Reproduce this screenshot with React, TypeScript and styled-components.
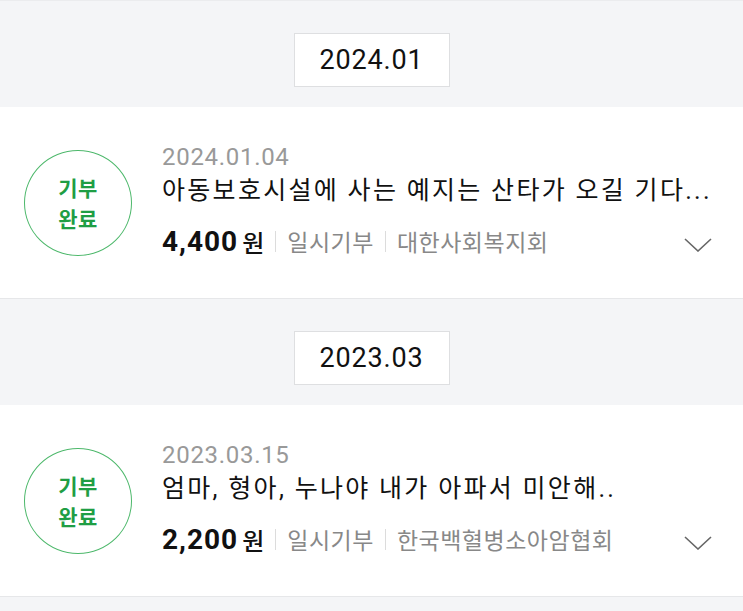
import React from "react";
import styled, { createGlobalStyle } from "styled-components";

const Global = createGlobalStyle`
  html, body { margin: 0; padding: 0; background: #f4f5f7; }
  body { font-family: Roboto, "Noto Sans CJK KR", sans-serif; }
`;

const Page = styled.div`
  width: 743px;
  border-top: 1px solid #ebecee;
  background: #f4f5f7;
`;

const MonthBand = styled.div<{ $end?: boolean }>`
  display: flex;
  justify-content: center;
  padding: ${(p) => (p.$end ? "0" : "32px 0 20px")};
  height: ${(p) => (p.$end ? "12px" : "auto")};
  background: #f4f5f7;
`;

const MonthBox = styled.div`
  width: 154px;
  height: 52px;
  border: 1px solid #dedfe1;
  background: #fff;
  display: flex;
  align-items: center;
  justify-content: center;
  font-family: Roboto, sans-serif;
  font-size: 27px;
  letter-spacing: 0.8px;
  color: #111;
`;

const Card = styled.div`
  display: flex;
  align-items: center;
  height: 191px;
  padding: 0 31px 0 24px;
  background: #fff;
  border-bottom: 1px solid #e6e7e9;
`;

const Badge = styled.div`
  flex: none;
  width: 106px;
  height: 104px;
  border: 1.5px solid #4db86b;
  border-radius: 50%;
  display: flex;
  flex-direction: column;
  align-items: center;
  justify-content: center;
  color: #1f9e44;
  font-family: "Noto Sans CJK KR", sans-serif;
  font-weight: 700;
  font-size: 21px;
  line-height: 31px;
  letter-spacing: 0.5px;
  margin-top: 1px;
`;

const BadgeLine = styled.span`
  display: block;
  height: 31px;
`;

const Body = styled.div`
  flex: 1;
  margin-left: 30px;
  display: flex;
  flex-direction: column;
`;

const DateText = styled.div`
  font-family: Roboto, sans-serif;
  font-size: 24px;
  line-height: 30px;
  letter-spacing: 0.7px;
  color: #999;
  margin-top: -4px;
`;

const Title = styled.div`
  font-family: Roboto, "Noto Sans CJK KR", sans-serif;
  font-size: 25px;
  line-height: 38px;
  letter-spacing: 2.3px;
  color: #111;
  white-space: nowrap;
`;

const Meta = styled.div`
  display: flex;
  align-items: center;
  height: 36px;
  margin-top: 13px;
`;

const Amount = styled.span`
  font-family: Roboto, sans-serif;
  font-weight: 700;
  font-size: 28px;
  letter-spacing: 1px;
  color: #111;
`;

const Won = styled.span`
  font-family: "Noto Sans CJK KR", sans-serif;
  font-weight: 500;
  font-size: 24px;
  color: #111;
  margin-left: 4px;
`;

const Divider = styled.span`
  width: 1px;
  height: 21px;
  background: #dcdcdc;
  margin: 0 11px;
`;

const MetaText = styled.span`
  font-family: "Noto Sans CJK KR", sans-serif;
  font-size: 23px;
  letter-spacing: 0.5px;
  color: #888;
`;

const Chevron = styled.svg`
  margin-left: auto;
  margin-top: 8px;
  flex: none;
`;

type Item = {
  month: string;
  date: string;
  title: string;
  amount: string;
  kind: string;
  org: string;
};

const items: Item[] = [
  {
    month: "2024.01",
    date: "2024.01.04",
    title: "아동보호시설에 사는 예지는 산타가 오길 기다...",
    amount: "4,400",
    kind: "일시기부",
    org: "대한사회복지회",
  },
  {
    month: "2023.03",
    date: "2023.03.15",
    title: "엄마, 형아, 누나야 내가 아파서 미안해..",
    amount: "2,200",
    kind: "일시기부",
    org: "한국백혈병소아암협회",
  },
];

export default function App() {
  return (
    <Page>
      <Global />
      {items.map((it) => (
        <React.Fragment key={it.date}>
          <MonthBand>
            <MonthBox>{it.month}</MonthBox>
          </MonthBand>
          <Card>
            <Badge>
              <BadgeLine>기부</BadgeLine>
              <BadgeLine>완료</BadgeLine>
            </Badge>
            <Body>
              <DateText>{it.date}</DateText>
              <Title>{it.title}</Title>
              <Meta>
                <Amount>{it.amount}</Amount>
                <Won>원</Won>
                <Divider />
                <MetaText>{it.kind}</MetaText>
                <Divider />
                <MetaText>{it.org}</MetaText>
                <Chevron width="28" height="14" viewBox="0 0 28 14">
                  <path d="M1 1 L14 13 L27 1" fill="none" stroke="#666" strokeWidth="1.6" />
                </Chevron>
              </Meta>
            </Body>
          </Card>
        </React.Fragment>
      ))}
      <MonthBand $end />
    </Page>
  );
}
